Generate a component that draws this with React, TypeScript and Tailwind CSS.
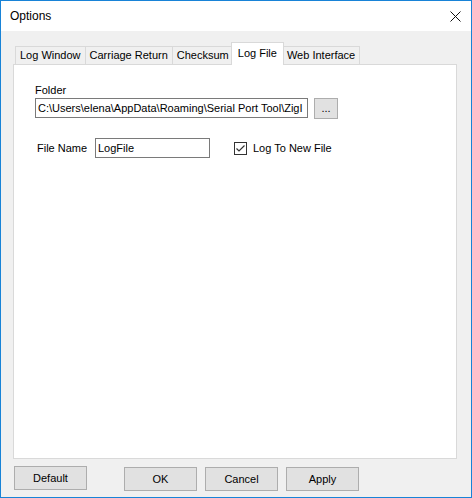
import React from "react";

const font = { fontFamily: '"Liberation Sans", Arial, sans-serif' };

function Tab({ label, selected, last }: { label: string; selected?: boolean; last?: boolean }) {
  if (selected) {
    return (
      <div className="relative z-10 -mx-[2px] -mb-px flex h-[23px] items-start border border-b-0 border-[#d9d9d9] bg-white px-[6px] pt-[4px] text-[11px] leading-[13px]">
        {label}
      </div>
    );
  }
  return (
    <div
      className={
        "flex h-[18px] items-center border-t border-l border-[#d9d9d9] bg-[#f0f0f0] px-[4px] text-[11px] leading-[13px] " +
        (last ? "border-r" : "")
      }
    >
      {label}
    </div>
  );
}

function Btn({ label, className }: { label: string; className?: string }) {
  return (
    <div
      className={
        "flex h-[24px] w-[73px] items-center justify-center border border-[#adadad] bg-[#e1e1e1] text-[11px] leading-[13px] text-black " +
        (className || "")
      }
    >
      {label}
    </div>
  );
}

export default function App() {
  return (
    <div
      style={font}
      className="flex h-[498px] w-[472px] flex-col border border-[#1883d7] bg-[#f0f0f0] text-black"
    >
      <div className="flex h-[30px] shrink-0 items-center justify-between bg-white pl-[9px] pr-[9px]">
        <span className="text-[12px] leading-[14px]">Options</span>
        <svg width="11" height="11" viewBox="0 0 11 11" className="mr-[1px]">
          <path d="M0.5 0.5 L10.5 10.5 M10.5 0.5 L0.5 10.5" stroke="#111" strokeWidth="1" fill="none" />
        </svg>
      </div>
      <div className="flex flex-1 flex-col pl-[12px] pr-[14px] pt-[11px]">
        <div className="flex h-[22px] items-end pl-[2px]">
          <Tab label="Log Window" />
          <Tab label="Carriage Return" />
          <Tab label="Checksum" />
          <Tab label="Log File" selected />
          <Tab label="Web Interface" last />
        </div>
        <div className="flex h-[395px] flex-col border border-[#d9d9d9] bg-white pl-[21px] pt-[18px]">
          <div className="text-[11px] leading-[14px]">Folder</div>
          <div className="mt-px flex items-start">
            <div className="flex h-[20px] w-[273px] items-center overflow-hidden whitespace-nowrap border border-[#7a7a7a] bg-white pl-[2px] text-[11px] leading-[13px]">
              C:\Users\elena\AppData\Roaming\Serial Port Tool\ZigI
            </div>
            <div className="ml-[6px] flex h-[21px] w-[24px] items-center justify-center border border-[#adadad] bg-[#e1e1e1] text-[11px] leading-[13px]">
              ...
            </div>
          </div>
          <div className="mt-[19px] flex items-center">
            <span className="ml-[2px] w-[58px] text-[11px] leading-[13px]">File Name</span>
            <div className="flex h-[20px] w-[115px] items-center border border-[#7a7a7a] bg-white pl-[2px] text-[11px] leading-[13px]">
              LogFile
            </div>
            <div className="ml-[24px] flex items-center">
              <div className="flex h-[13px] w-[13px] items-center justify-center border border-[#333] bg-white">
                <svg width="11" height="11" viewBox="0 0 11 11">
                  <path d="M1.5 5.5 L4 8 L9.5 2.5" stroke="#333" strokeWidth="1.2" fill="none" />
                </svg>
              </div>
              <span className="ml-[6px] text-[11px] leading-[13px]">Log To New File</span>
            </div>
          </div>
        </div>
        <div className="mt-[7px] flex items-start">
          <Btn label="Default" className="ml-[1px]" />
          <Btn label="OK" className="ml-[37px] mt-px" />
          <Btn label="Cancel" className="ml-[8px] mt-px" />
          <Btn label="Apply" className="ml-[8px] mt-px" />
        </div>
      </div>
    </div>
  );
}
